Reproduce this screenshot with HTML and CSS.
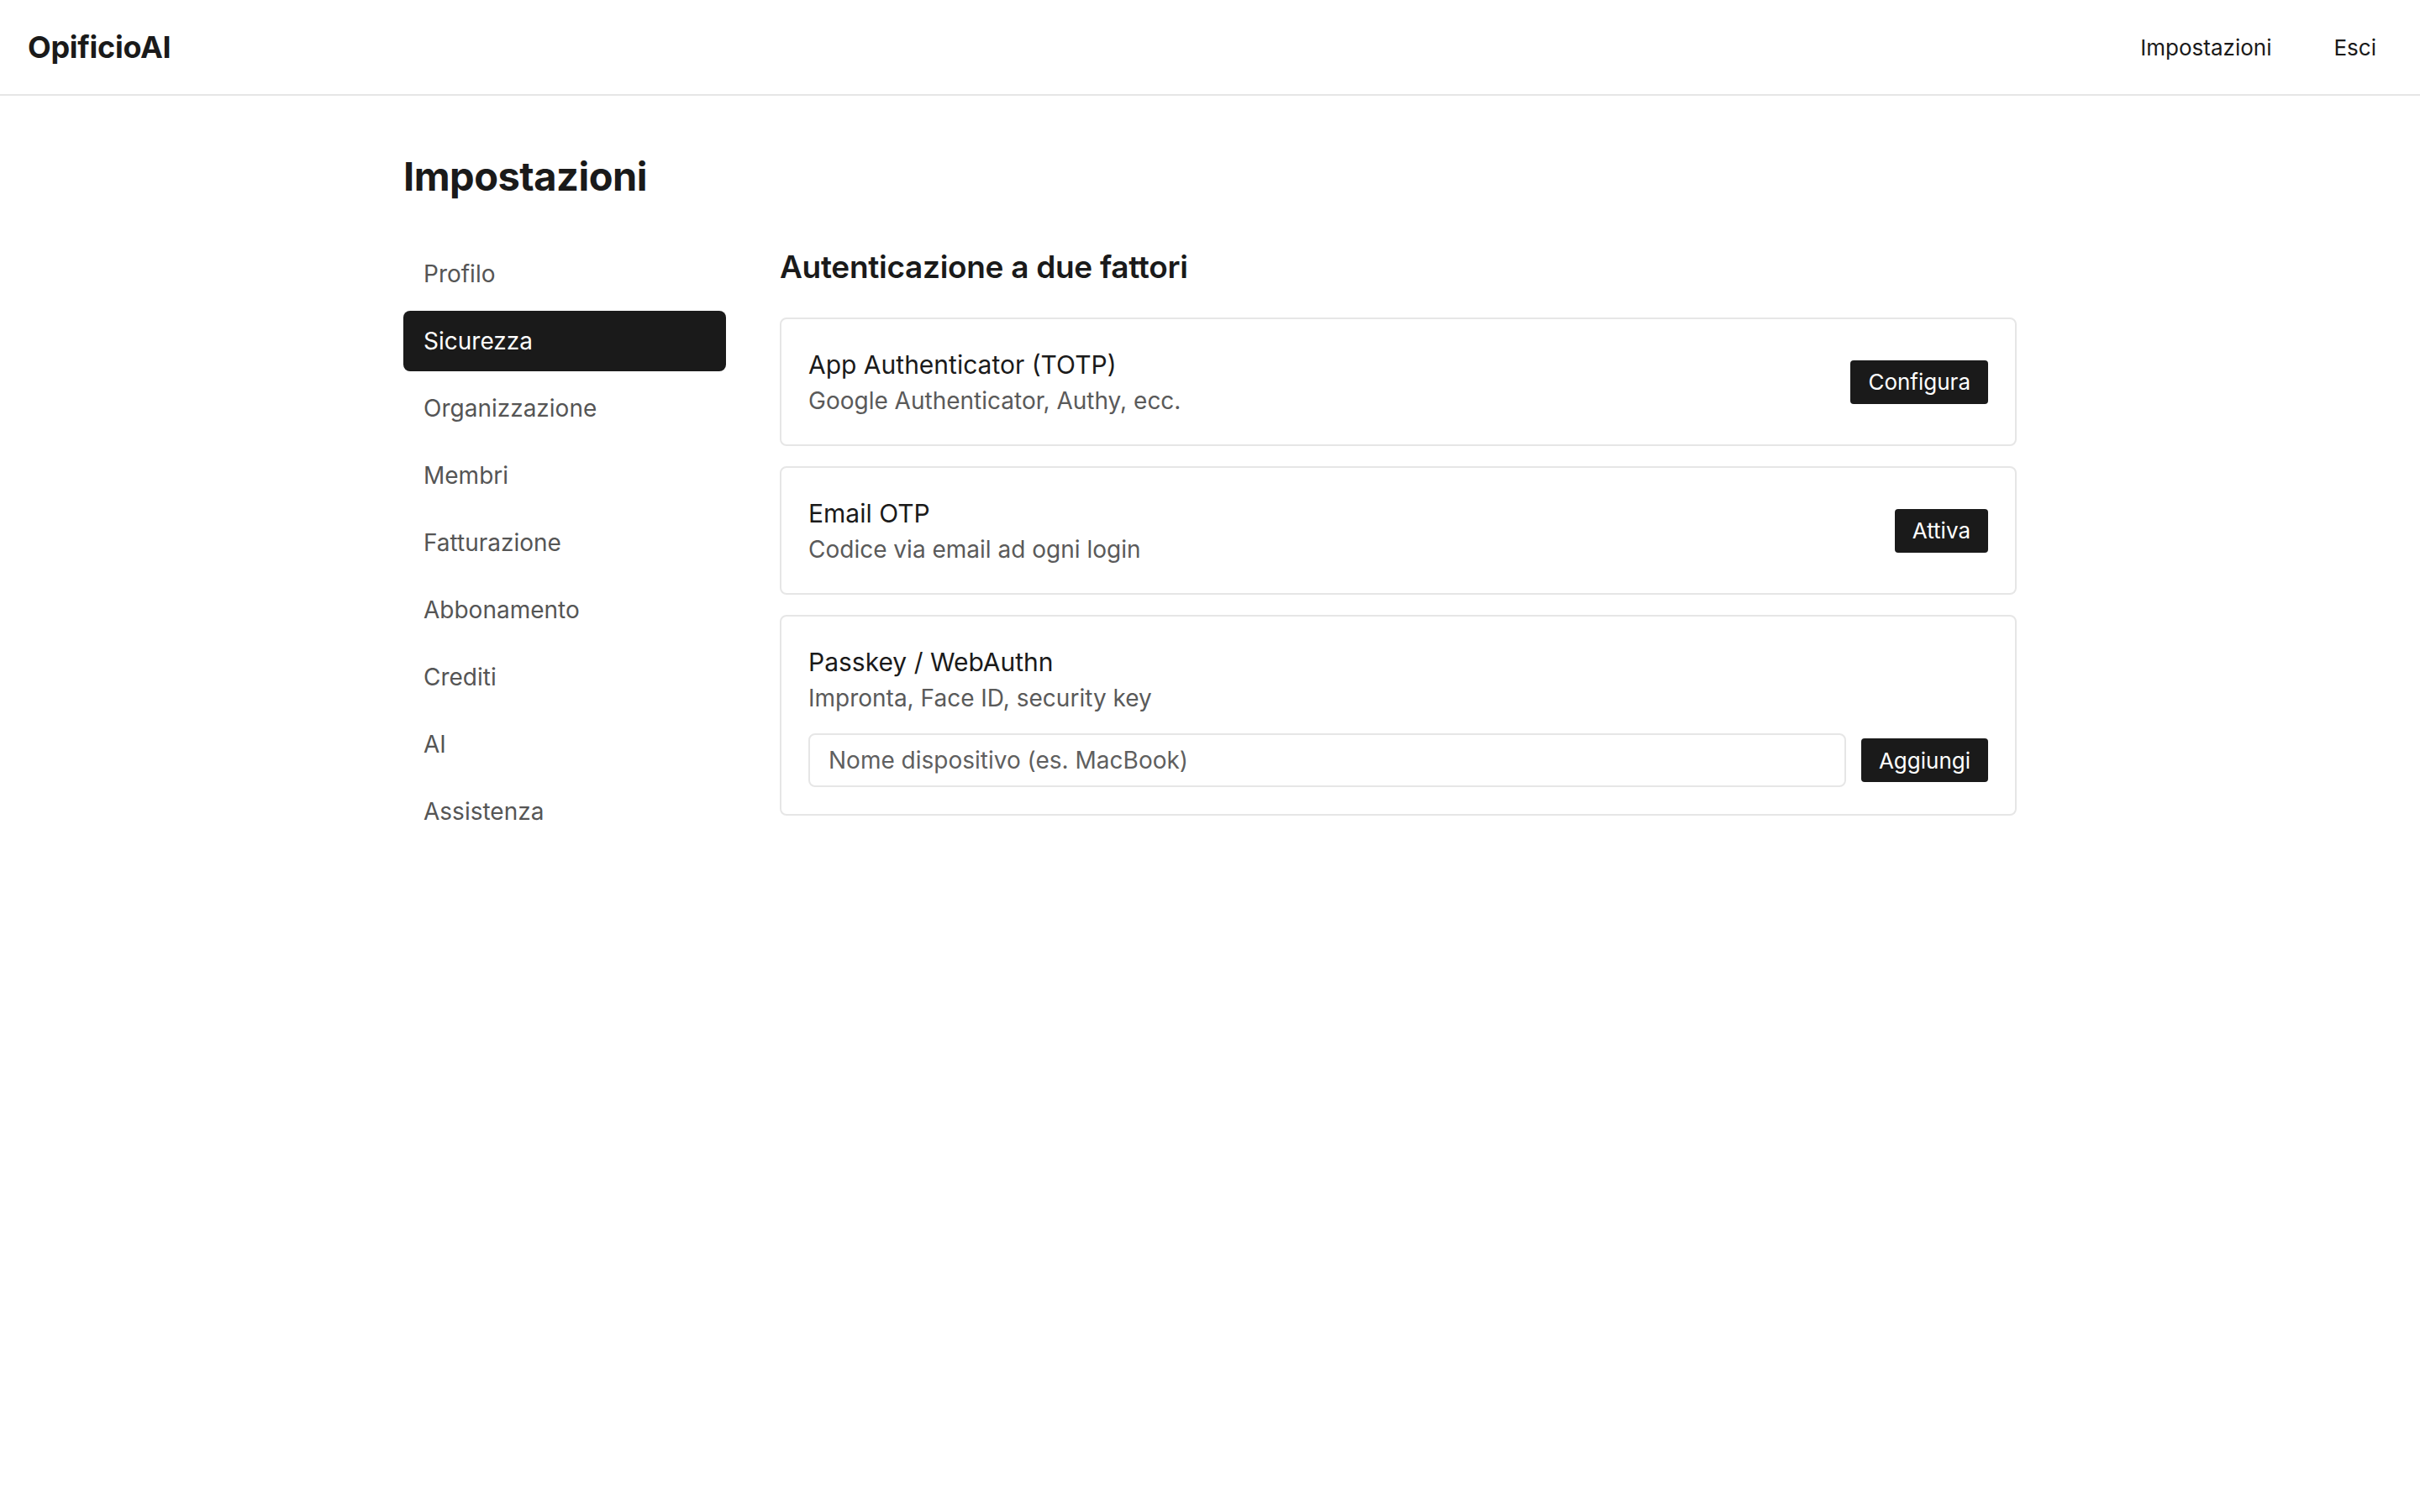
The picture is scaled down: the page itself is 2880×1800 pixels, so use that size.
FILE: index.html
```html
<html>
<head>
<link rel="stylesheet" href="styles.css">
<meta charset="UTF-8">
<title>Impostazioni - OpificioAI</title>
</head>
<body>
  <header class="topbar">
    <div class="logo">OpificioAI</div>
    <nav class="topnav">
      <a href="#">Impostazioni</a>
      <a href="#">Esci</a>
    </nav>
  </header>

  <div class="page">
    <h1 class="pageTitle">Impostazioni</h1>
    <div class="layout">
      <ul class="sidenav">
        <li>Profilo</li>
        <li class="current">Sicurezza</li>
        <li>Organizzazione</li>
        <li>Membri</li>
        <li>Fatturazione</li>
        <li>Abbonamento</li>
        <li>Crediti</li>
        <li>AI</li>
        <li>Assistenza</li>
      </ul>

      <div class="main">
        <h2 class="sectionTitle">Autenticazione a due fattori</h2>

        <div class="card row">
          <div class="info">
            <div class="cardTitle">App Authenticator (TOTP)</div>
            <div class="cardSub">Google Authenticator, Authy, ecc.</div>
          </div>
          <button class="btn">Configura</button>
        </div>

        <div class="card row">
          <div class="info">
            <div class="cardTitle">Email OTP</div>
            <div class="cardSub">Codice via email ad ogni login</div>
          </div>
          <button class="btn">Attiva</button>
        </div>

        <div class="card">
          <div class="info">
            <div class="cardTitle">Passkey / WebAuthn</div>
            <div class="cardSub">Impronta, Face ID, security key</div>
          </div>
          <div class="addRow">
            <input class="field" type="text" placeholder="Nome dispositivo (es. MacBook)">
            <button class="btn">Aggiungi</button>
          </div>
        </div>
      </div>
    </div>
  </div>
</body>
</html>
```

FILE: styles.css
```css
* {
  box-sizing: border-box;
}

body {
  margin: 0;
  background: #ffffff;
  color: #1a1a1a;
  font-family: "Inter", "Liberation Sans", sans-serif;
}

/* top bar */
.topbar {
  height: 114px;
  border-bottom: 2px solid #e6e6e6;
  display: flex;
  align-items: center;
  justify-content: space-between;
  padding: 0 52px 0 33px;
}
.logo {
  font-size: 36px;
  font-weight: 700;
  letter-spacing: -0.3px;
}
.topnav {
  display: flex;
  gap: 74px;
}
.topnav a {
  color: #1a1a1a;
  text-decoration: none;
  font-size: 26px;
}

/* page */
.page {
  width: 1920px;
  margin: 0 auto;
  padding-top: 64px;
}
.pageTitle {
  margin: 0 0 48px;
  font-size: 47px;
  line-height: 64px;
  font-weight: 700;
  letter-spacing: -0.5px;
}
.layout {
  display: flex;
  gap: 64px;
  align-items: flex-start;
}

/* side menu */
.sidenav {
  width: 384px;
  flex: none;
  margin: 0;
  padding: 0;
  list-style: none;
  display: flex;
  flex-direction: column;
  gap: 8px;
}
.sidenav li {
  height: 72px;
  display: flex;
  align-items: center;
  padding: 0 24px;
  border-radius: 8px;
  font-size: 28px;
  color: #555555;
}
.sidenav li.current {
  background: #1a1a1a;
  color: #ffffff;
}

/* main column */
.main {
  flex: 1;
  display: flex;
  flex-direction: column;
  gap: 24px;
}
.sectionTitle {
  margin: 0 0 8px;
  font-size: 37px;
  line-height: 56px;
  font-weight: 600;
  letter-spacing: -0.3px;
}
.card {
  border: 2px solid #e6e6e6;
  border-radius: 8px;
  padding: 32px;
}
.card.row {
  display: flex;
  align-items: center;
  justify-content: space-between;
}
.cardTitle {
  font-size: 30px;
  line-height: 45px;
  color: #1a1a1a;
}
.cardSub {
  font-size: 28px;
  line-height: 40px;
  color: #5a5a5a;
}
.btn {
  height: 52px;
  padding: 0 21px;
  border: none;
  border-radius: 4px;
  background: #1a1a1a;
  color: #ffffff;
  font-family: inherit;
  font-size: 26px;
}
.addRow {
  display: flex;
  align-items: center;
  gap: 18px;
  margin-top: 22px;
}
.field {
  flex: 1;
  height: 64px;
  border: 2px solid #e6e6e6;
  border-radius: 8px;
  padding: 0 22px;
  font-family: inherit;
  font-size: 28px;
  color: #1a1a1a;
}
.field::placeholder {
  color: #5f5f5f;
}
```
